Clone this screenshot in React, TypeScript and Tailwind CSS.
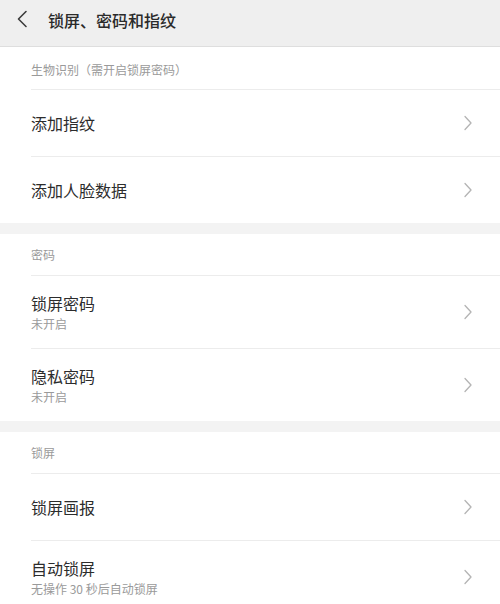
const font = { fontFamily: '"Noto Sans CJK SC", "Noto Sans", sans-serif' };

type Item = { title: string; sub?: string };
type Section = { label: string; items: Item[] };

const sections: Section[] = [
  {
    label: '生物识别（需开启锁屏密码）',
    items: [{ title: '添加指纹' }, { title: '添加人脸数据' }],
  },
  {
    label: '密码',
    items: [
      { title: '锁屏密码', sub: '未开启' },
      { title: '隐私密码', sub: '未开启' },
    ],
  },
  {
    label: '锁屏',
    items: [{ title: '锁屏画报' }, { title: '自动锁屏', sub: '无操作 30 秒后自动锁屏' }],
  },
];

function Chevron() {
  return (
    <svg width="10" height="16" viewBox="0 0 10 16" fill="none" className="shrink-0">
      <path d="M2 1.5 L8 8 L2 14.5" stroke="#b4b4b4" strokeWidth="1.3" strokeLinecap="round" strokeLinejoin="round" />
    </svg>
  );
}

function Row({ item }: { item: Item }) {
  return (
    <div className={`flex items-center border-t border-[#ececec] pr-[27px] ${item.sub ? 'h-[73px]' : 'h-[67px]'}`}>
      <div className="flex-1 flex flex-col">
        <div className="text-[16px] leading-[22px] text-[#2c2c2c]">{item.title}</div>
        {item.sub && <div className="text-[12px] leading-[18px] text-[#9a9a9a] mt-[1px]">{item.sub}</div>}
      </div>
      <Chevron />
    </div>
  );
}

export default function App() {
  return (
    <div className="w-[500px] h-[604px] overflow-hidden bg-[#f3f3f3]" style={font}>
      <div className="h-[47px] bg-[#efefef] border-b border-[#dedede] flex items-center pb-[7px]">
        <svg width="12" height="18" viewBox="0 0 12 18" fill="none" className="ml-[16px] -mt-[2px]">
          <path d="M10 1.5 L2.5 9 L10 16.5" stroke="#3c3c3c" strokeWidth="1.6" strokeLinecap="round" strokeLinejoin="round" />
        </svg>
        <div className="ml-[20px] text-[16px] font-medium text-[#2a2a2a]">锁屏、密码和指纹</div>
      </div>
      {sections.map((s, i) => (
        <div key={s.label} className={`bg-white pl-[31px] ${i > 0 ? 'mt-[11px]' : ''}`}>
          <div className={`flex items-center text-[12px] text-[#9a9a9a] ${i === 0 ? 'h-[42px] pt-[3px]' : 'h-[41px]'}`}>{s.label}</div>
          {s.items.map((it) => (
            <Row key={it.title} item={it} />
          ))}
        </div>
      ))}
    </div>
  );
}
